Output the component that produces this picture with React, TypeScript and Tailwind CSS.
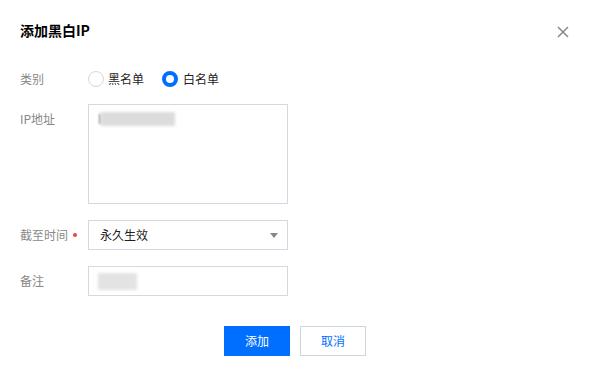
import React from "react";

const font = { fontFamily: '"Noto Sans CJK SC", "Noto Sans", sans-serif' };

function Label({ children, required }: { children: React.ReactNode; required?: boolean }) {
  return (
    <div className="w-[68px] shrink-0 h-[30px] flex items-center text-[12px] text-[#888888]">
      <span>{children}</span>
      {required && <span className="ml-[5px] w-[4px] h-[4px] rounded-full bg-[#e54545]" />}
    </div>
  );
}

export default function App() {
  return (
    <div className="w-[590px] h-[376px] bg-white relative" style={font}>
      <div className="pt-[20px] px-[20px]">
        <div className="flex items-center justify-between h-[20px]">
          <h1 className="text-[14px] leading-[20px] font-bold text-[#000000]">添加黑白IP</h1>
          <button className="mt-[4px] w-[14px] h-[14px] flex items-center justify-center text-[#888888]">
            <svg width="12" height="12" viewBox="0 0 12 12" fill="none" stroke="currentColor" strokeWidth="1.5">
              <path d="M1 1 L11 11 M11 1 L1 11" />
            </svg>
          </button>
        </div>

        {/* 类别 */}
        <div className="mt-[24px] flex items-center h-[30px]">
          <Label>类别</Label>
          <div className="flex items-center">
            <label className="flex items-center">
              <span className="w-[16px] h-[16px] rounded-full border border-[#d8d8d8] bg-white" />
              <span className="ml-[4px] text-[12px] text-[#000000e6]">黑名单</span>
            </label>
            <label className="flex items-center ml-[18px]">
              <span className="w-[16px] h-[16px] rounded-full border-[4px] border-[#006eff] bg-white" />
              <span className="ml-[5px] text-[12px] text-[#000000e6]">白名单</span>
            </label>
          </div>
        </div>

        {/* IP地址 */}
        <div className="mt-[10px] flex items-start">
          <Label>IP地址</Label>
          <div className="w-[200px] h-[100px] border border-[#d3d9e3] relative">
            <div className="absolute left-[10px] top-[9px] w-[2px] h-[10px] bg-[#9a9a9a] blur-[1px]" />
            <div className="absolute left-[12px] top-[7px] w-[74px] h-[14px] bg-[#dcdcdc] blur-[1.5px]" />
          </div>
        </div>

        {/* 截至时间 */}
        <div className="mt-[16px] flex items-center">
          <Label required>截至时间</Label>
          <div className="w-[200px] h-[30px] border border-[#d3d9e3] flex items-center justify-between pl-[11px] pr-[9px]">
            <span className="text-[12px] text-[#000000e6]">永久生效</span>
            <svg width="8" height="5" viewBox="0 0 8 5">
              <path d="M0 0 L8 0 L4 5 Z" fill="#888888" />
            </svg>
          </div>
        </div>

        {/* 备注 */}
        <div className="mt-[16px] flex items-center">
          <Label>备注</Label>
          <div className="w-[200px] h-[30px] border border-[#d3d9e3] relative">
            <div className="absolute left-[9px] top-[6px] w-[39px] h-[17px] bg-[#e3e3e3] blur-[1.5px]" />
          </div>
        </div>

        {/* Buttons */}
        <div className="mt-[30px] flex justify-center gap-[10px]">
          <button className="w-[66px] h-[30px] bg-[#006eff] text-white text-[12px]">添加</button>
          <button className="w-[66px] h-[30px] bg-white border border-[#cfd5de] text-[#006eff] text-[12px]">取消</button>
        </div>
      </div>
    </div>
  );
}
